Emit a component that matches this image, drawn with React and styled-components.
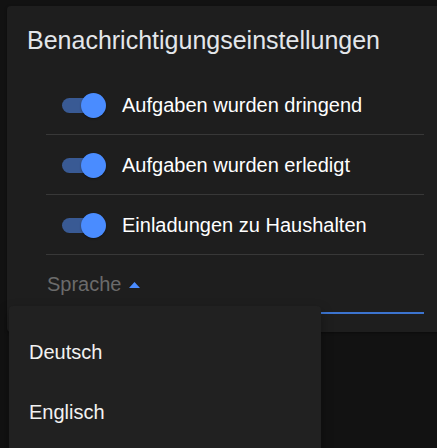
import React from "react";
import styled, { createGlobalStyle } from "styled-components";

const GlobalStyle = createGlobalStyle`
  html, body {
    margin: 0;
    padding: 0;
    background: #121212;
    overflow: hidden;
    font-family: "Liberation Sans", Arial, sans-serif;
  }
  * { box-sizing: border-box; }
`;

const Page = styled.div`
  width: 437px;
  height: 448px;
  padding: 6px 0 0 7px;
`;

const Card = styled.section`
  position: relative;
  width: 437px;
  height: 326px;
  background: #1e1e1e;
  border-radius: 4px;
  padding: 20px 20px 0 20px;
  box-shadow: 0 1px 3px rgba(0, 0, 0, 0.4);
`;

const Title = styled.h2`
  margin: 0;
  font-size: 25px;
  line-height: 29px;
  font-weight: 400;
  color: #e3e6ea;
`;

const List = styled.div`
  margin: 20px 0 0 19px;
  display: flex;
  flex-direction: column;
`;

const Row = styled.div`
  height: 60px;
  display: flex;
  align-items: center;
  padding: 1px 0 0 16px;
  border-bottom: 1px solid #383838;
`;

const Switch = styled.span`
  position: relative;
  width: 43px;
  height: 25px;
  flex: none;
  display: flex;
  align-items: center;
`;

const Track = styled.span`
  width: 38px;
  height: 15px;
  border-radius: 8px;
  background: ${(p) => (p.$on ? "#395a94" : "#5a5a5a")};
`;

const Thumb = styled.span`
  position: absolute;
  top: 0;
  left: ${(p) => (p.$on ? "19px" : "0")};
  width: 25px;
  height: 25px;
  border-radius: 50%;
  background: ${(p) => (p.$on ? "#4a8cff" : "#bdbdbd")};
  box-shadow: 0 1px 2px rgba(0, 0, 0, 0.35);
`;

const Label = styled.span`
  margin-left: 17px;
  font-size: 20px;
  line-height: 23px;
  color: #ffffff;
`;

const Field = styled.div`
  margin: 18px 0 0 19px;
  padding: 0 0 16px 1px;
  border-bottom: 2px solid #3c74cf;
  display: flex;
  align-items: center;
  gap: 7px;
`;

const FieldLabel = styled.span`
  font-size: 20px;
  line-height: 23px;
  color: #6b6b6b;
`;

const Menu = styled.ul`
  position: absolute;
  left: 2px;
  top: 300px;
  width: 312px;
  height: 160px;
  margin: 0;
  padding: 16px 0 0 0;
  list-style: none;
  background: #212121;
  box-shadow: 0 5px 12px rgba(0, 0, 0, 0.35);
  border-radius: 4px;
`;

const MenuItem = styled.li`
  height: 60px;
  display: flex;
  align-items: center;
  padding-left: 20px;
  font-size: 20px;
  color: #f2f2f2;
`;

const items = [
  "Aufgaben wurden dringend",
  "Aufgaben wurden erledigt",
  "Einladungen zu Haushalten",
];

export default function App() {
  return (
    <Page>
      <GlobalStyle />
      <Card>
        <Title>Benachrichtigungseinstellungen</Title>
        <List>
          {items.map((t) => (
            <Row key={t}>
              <Switch>
                <Track $on />
                <Thumb $on />
              </Switch>
              <Label>{t}</Label>
            </Row>
          ))}
        </List>
        <Field>
          <FieldLabel>Sprache</FieldLabel>
          <svg width="11" height="6" viewBox="0 0 11 6">
            <polygon points="0,6 5.5,0 11,6" fill="#4a8cff" />
          </svg>
        </Field>
        <Menu>
          <MenuItem>Deutsch</MenuItem>
          <MenuItem>Englisch</MenuItem>
        </Menu>
      </Card>
    </Page>
  );
}
